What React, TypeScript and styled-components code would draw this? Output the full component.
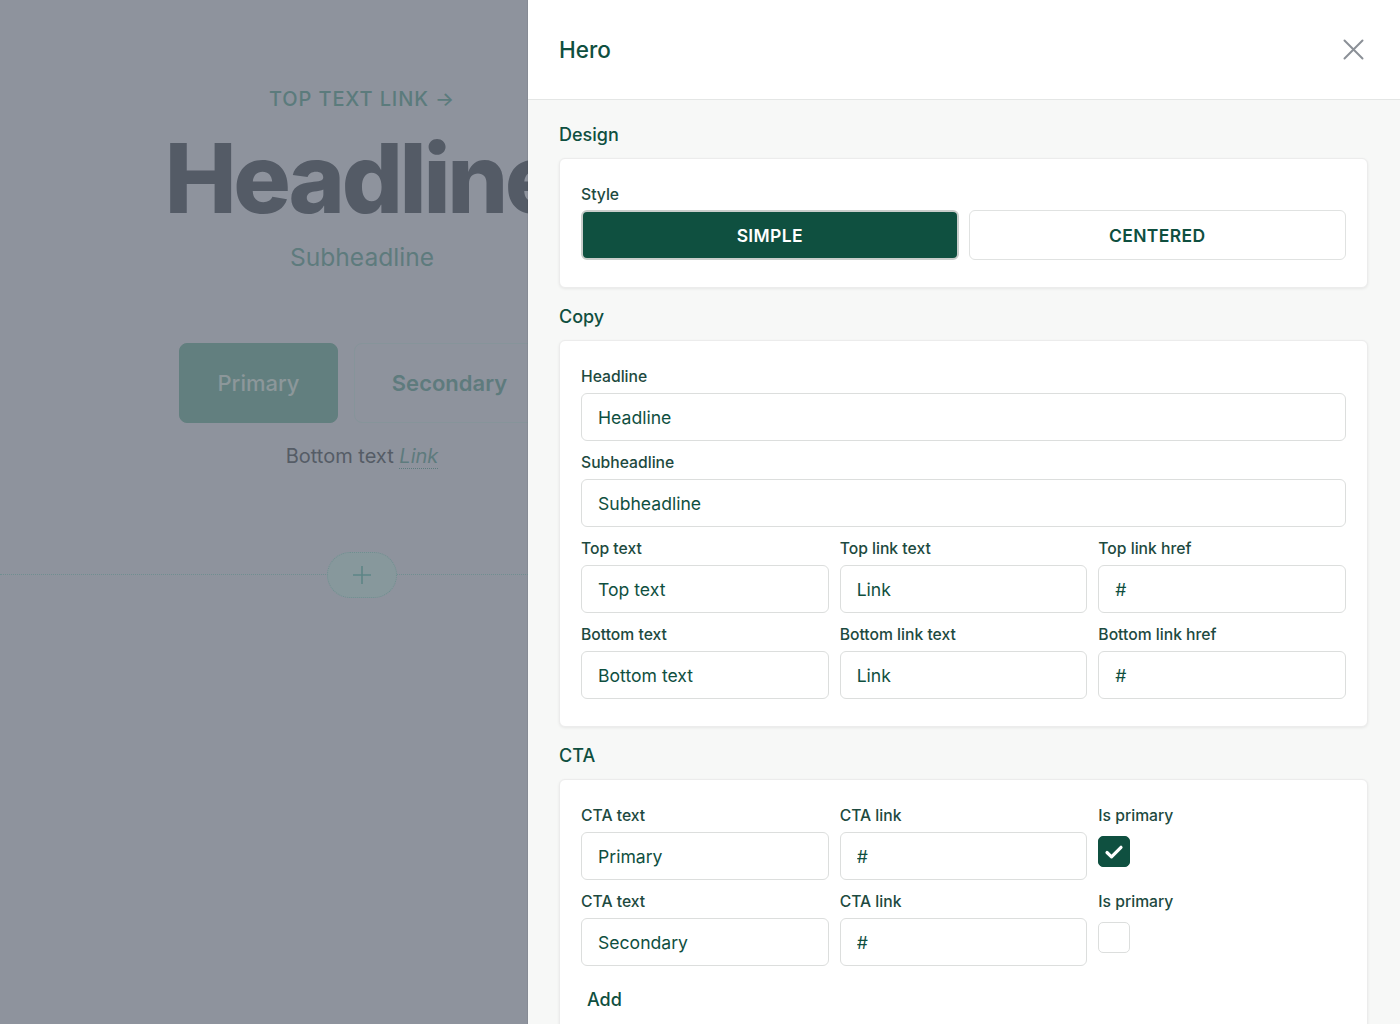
import React from "react";
import styled, { createGlobalStyle } from "styled-components";

const Global = createGlobalStyle`
  html, body { margin: 0; padding: 0; }
  body {
    font-family: Inter, "Noto Sans", "Liberation Sans", sans-serif;
    background: #8e939d;
  }
  * { box-sizing: border-box; }
`;

const Page = styled.div`
  display: flex;
  width: 1400px;
  height: 1024px;
  overflow: hidden;
`;

/* ---------- left preview ---------- */
const Preview = styled.div`
  width: 528px;
  flex: none;
  height: 1024px;
  overflow: hidden;
  background: #8e939d;
`;

const Hero = styled.div`
  width: 724px;
  display: flex;
  flex-direction: column;
  align-items: center;
  padding-top: 87px;
`;

const TopLink = styled.div`
  font-size: 20px;
  line-height: 24px;
  font-weight: 500;
  letter-spacing: 0.045em;
  text-transform: uppercase;
  color: #5b7b7c;
`;

const BigHeadline = styled.h1`
  margin: 19px 0 0;
  font-size: 96px;
  line-height: 1;
  font-weight: 800;
  letter-spacing: -0.035em;
  color: #545b66;
  white-space: nowrap;
`;

const Sub = styled.div`
  margin-top: 15px;
  font-size: 24.6px;
  line-height: 32px;
  color: #5e7b7d;
`;

const Buttons = styled.div`
  margin-top: 70px;
  display: flex;
  gap: 16px;
`;

const PreviewButton = styled.div<{ $primary?: boolean }>`
  height: 80px;
  width: ${(p) => (p.$primary ? "159px" : "191px")};
  border-radius: 8px;
  display: flex;
  align-items: center;
  justify-content: center;
  font-size: 22px;
  font-weight: ${(p) => (p.$primary ? 500 : 600)};
  color: ${(p) => (p.$primary ? "#8c979a" : "#5e7b7d")};
  background: ${(p) => (p.$primary ? "#627f7f" : "transparent")};
  border: 1px solid ${(p) => (p.$primary ? "#627f7f" : "#86949a")};
`;

const Bottom = styled.div`
  margin-top: 19px;
  font-size: 20px;
  line-height: 28px;
  color: #555c66;
`;

const BottomLink = styled.span`
  font-style: italic;
  color: #5e7b7d;
  border-bottom: 1px dotted #5e7b7d;
`;

const DividerRow = styled.div`
  margin-top: 82px;
  width: 724px;
  height: 46px;
  display: flex;
  align-items: center;
  justify-content: center;
  position: relative;
  &::before {
    content: "";
    position: absolute;
    left: 0;
    right: 0;
    top: 22px;
    border-top: 1px dotted #6f8e90;
  }
`;

const AddPill = styled.div`
  position: relative;
  width: 70px;
  height: 46px;
  border-radius: 23px;
  border: 1px dotted #6f8e90;
  background: #87989c;
  display: flex;
  align-items: center;
  justify-content: center;
`;

/* ---------- right panel ---------- */
const Panel = styled.div`
  flex: 1;
  height: 1024px;
  background: #f7f8f7;
  display: flex;
  flex-direction: column;
  box-shadow: -1px 0 0 rgba(0, 0, 0, 0.05);
`;

const PanelHeader = styled.div`
  height: 100px;
  flex: none;
  background: #ffffff;
  border-bottom: 1px solid #e4e6e5;
  display: flex;
  align-items: center;
  justify-content: space-between;
  padding: 0 36px 0 31px;
`;

const Title = styled.h2`
  margin: 0;
  font-size: 22.5px;
  font-weight: 500;
  color: #0f4f3f;
`;

const CloseButton = styled.button`
  border: 0;
  background: none;
  padding: 0;
  width: 21px;
  height: 21px;
  display: flex;
  cursor: pointer;
`;

const Body = styled.div`
  padding: 23px 32px 0 31px;
  display: flex;
  flex-direction: column;
  gap: 17px;
`;

const Section = styled.section`
  display: flex;
  flex-direction: column;
  gap: 11px;
`;

const SectionTitle = styled.h3`
  margin: 0;
  font-size: 18px;
  line-height: 24px;
  font-weight: 500;
  color: #0f4f3f;
`;

const Card = styled.div`
  background: #ffffff;
  border: 1px solid #ececec;
  border-radius: 6px;
  box-shadow: 0 1px 3px rgba(0, 0, 0, 0.07);
  padding: 26px 21px 27px 21px;
  display: flex;
  flex-direction: column;
  gap: 12px;
`;

const Grid = styled.div<{ $cols: number }>`
  display: grid;
  grid-template-columns: repeat(${(p) => p.$cols}, 1fr);
  column-gap: 11px;
  row-gap: 12px;
`;

const Field = styled.label`
  display: flex;
  flex-direction: column;
  gap: 6px;
`;

const Label = styled.span`
  font-size: 15.7px;
  line-height: 20px;
  font-weight: 500;
  color: #1d4a40;
`;

const Input = styled.input`
  height: 48px;
  width: 100%;
  border: 1px solid #dcdedd;
  border-radius: 6px;
  background: #fff;
  padding: 0 16px;
  font-family: inherit;
  font-size: 17.6px;
  color: #0f4f3f;
  outline: none;
`;

const StyleRow = styled.div`
  display: grid;
  grid-template-columns: 1fr 1fr;
  gap: 10px;
  margin-top: -1px;
`;

const StyleButton = styled.button<{ $active?: boolean }>`
  height: 50px;
  border-radius: 6px;
  font-family: inherit;
  font-size: 17.5px;
  font-weight: 600;
  letter-spacing: 0.02em;
  text-transform: uppercase;
  cursor: pointer;
  background: ${(p) => (p.$active ? "#0f5040" : "#ffffff")};
  color: ${(p) => (p.$active ? "#ffffff" : "#0f4f3f")};
  border: ${(p) => (p.$active ? "2px solid #c9cdcb" : "1px solid #e0e2e1")};
`;

const CheckBox = styled.span<{ $checked?: boolean }>`
  margin-top: 4px;
  width: 32px;
  height: 31px;
  border-radius: 5px;
  display: flex;
  align-items: center;
  justify-content: center;
  background: ${(p) => (p.$checked ? "#0f5040" : "#ffffff")};
  border: 1px solid ${(p) => (p.$checked ? "#0f5040" : "#dcdedd")};
`;

const AddButton = styled.button`
  align-self: flex-start;
  margin-top: 10px;
  border: 0;
  background: none;
  padding: 0 6px;
  font-family: inherit;
  font-size: 18px;
  line-height: 24px;
  font-weight: 500;
  color: #0f4f3f;
  cursor: pointer;
`;

const ctas = [
  { text: "Primary", link: "#", primary: true },
  { text: "Secondary", link: "#", primary: false },
];

export default function App() {
  return (
    <>
      <Global />
      <Page>
        <Preview>
          <Hero>
            <TopLink>Top text link →</TopLink>
            <BigHeadline>Headline</BigHeadline>
            <Sub>Subheadline</Sub>
            <Buttons>
              <PreviewButton $primary>Primary</PreviewButton>
              <PreviewButton>Secondary</PreviewButton>
            </Buttons>
            <Bottom>
              Bottom text <BottomLink>Link</BottomLink>
            </Bottom>
            <DividerRow>
              <AddPill>
                <svg width="22" height="22" viewBox="0 0 22 22">
                  <path d="M11 2v18M2 11h18" stroke="#5e8586" strokeWidth="1.6" fill="none" />
                </svg>
              </AddPill>
            </DividerRow>
          </Hero>
        </Preview>
        <Panel>
          <PanelHeader>
            <Title>Hero</Title>
            <CloseButton aria-label="Close">
              <svg width="21" height="21" viewBox="0 0 21 21">
                <path d="M1.5 1.5l18 18M19.5 1.5l-18 18" stroke="#8b9097" strokeWidth="2" strokeLinecap="round" fill="none" />
              </svg>
            </CloseButton>
          </PanelHeader>
          <Body>
            <Section>
              <SectionTitle>Design</SectionTitle>
              <Card>
                <Field as="div">
                  <Label>Style</Label>
                  <StyleRow>
                    <StyleButton $active>Simple</StyleButton>
                    <StyleButton>Centered</StyleButton>
                  </StyleRow>
                </Field>
              </Card>
            </Section>
            <Section>
              <SectionTitle>Copy</SectionTitle>
              <Card>
                <Field>
                  <Label>Headline</Label>
                  <Input defaultValue="Headline" />
                </Field>
                <Field>
                  <Label>Subheadline</Label>
                  <Input defaultValue="Subheadline" />
                </Field>
                <Grid $cols={3}>
                  <Field>
                    <Label>Top text</Label>
                    <Input defaultValue="Top text" />
                  </Field>
                  <Field>
                    <Label>Top link text</Label>
                    <Input defaultValue="Link" />
                  </Field>
                  <Field>
                    <Label>Top link href</Label>
                    <Input defaultValue="#" />
                  </Field>
                  <Field>
                    <Label>Bottom text</Label>
                    <Input defaultValue="Bottom text" />
                  </Field>
                  <Field>
                    <Label>Bottom link text</Label>
                    <Input defaultValue="Link" />
                  </Field>
                  <Field>
                    <Label>Bottom link href</Label>
                    <Input defaultValue="#" />
                  </Field>
                </Grid>
              </Card>
            </Section>
            <Section>
              <SectionTitle>CTA</SectionTitle>
              <Card>
                <Grid $cols={3}>
                  {ctas.map((c) => (
                    <React.Fragment key={c.text}>
                      <Field>
                        <Label>CTA text</Label>
                        <Input defaultValue={c.text} />
                      </Field>
                      <Field>
                        <Label>CTA link</Label>
                        <Input defaultValue={c.link} />
                      </Field>
                      <Field as="div">
                        <Label>Is primary</Label>
                        <CheckBox $checked={c.primary}>
                          {c.primary && (
                            <svg width="22" height="22" viewBox="0 0 22 22">
                              <path d="M4 11.5l4.5 4.3L18 6.3" stroke="#fff" strokeWidth="3.2" strokeLinecap="round" strokeLinejoin="round" fill="none" />
                            </svg>
                          )}
                        </CheckBox>
                      </Field>
                    </React.Fragment>
                  ))}
                </Grid>
                <AddButton>Add</AddButton>
              </Card>
            </Section>
          </Body>
        </Panel>
      </Page>
    </>
  );
}
